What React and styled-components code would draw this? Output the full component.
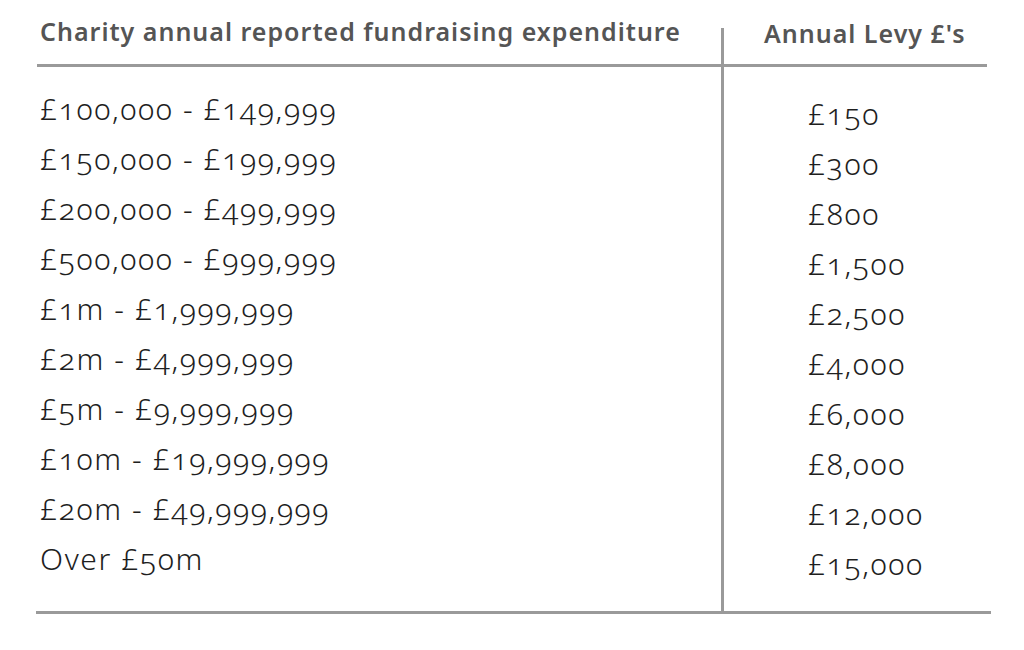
import styled, { createGlobalStyle } from "styled-components";

const GlobalStyle = createGlobalStyle`
    body {
        margin: 0;
        background: #ffffff;
        font-family: "Noto Sans", "Open Sans", sans-serif;
    }
`

const bands = [
    ["£100,000 - £149,999", "£150"],
    ["£150,000 - £199,999", "£300"],
    ["£200,000 - £499,999", "£800"],
    ["£500,000 - £999,999", "£1,500"],
    ["£1m - £1,999,999", "£2,500"],
    ["£2m - £4,999,999", "£4,000"],
    ["£5m - £9,999,999", "£6,000"],
    ["£10m - £19,999,999", "£8,000"],
    ["£20m - £49,999,999", "£12,000"],
    ["Over £50m", "£15,000"],
]

export default function App(){
    return(
        <Page>
            <GlobalStyle />
            <Table>
                <HeadLeft>Charity annual reported fundraising expenditure</HeadLeft>
                <HeadRight><span>Annual Levy £'s</span></HeadRight>
                <BodyLeft>
                    {bands.map(b => <Cell key={b[0]}>{b[0]}</Cell>)}
                </BodyLeft>
                <BodyRight>
                    {bands.map(b => <Cell key={b[1]}>{b[1]}</Cell>)}
                </BodyRight>
            </Table>
        </Page>
    )
}

const Page = styled.div`
    width: 1024px;
    height: 650px;
    padding: 0 33px 0 36px;
    box-sizing: border-box;
`

const Table = styled.div`
    display: grid;
    grid-template-columns: 685px 1fr;
    border-bottom: 3px solid #9a9a9a;
`

const HeadLeft = styled.div`
    padding: 16px 0 18px 3px;
    margin-left: 1px;
    border-bottom: 3px solid #9a9a9a;
    font-size: 25px;
    font-weight: 600;
    letter-spacing: 1px;
    color: #555555;
    line-height: 30px;
    white-space: nowrap;
`

const HeadRight = styled.div`
    margin-top: 28px;
    margin-right: 4px;
    border-left: 3px solid #9a9a9a;
    border-bottom: 3px solid #9a9a9a;
    font-size: 25px;
    font-weight: 600;
    letter-spacing: 1px;
    color: #555555;
    line-height: 30px;

    span{
        display: block;
        margin-top: -10px;
        padding-left: 40px;
    }
`

const BodyLeft = styled.div`
    padding: 17px 0 27px 4px;
    display: flex;
    flex-direction: column;
`

const BodyRight = styled.div`
    padding: 22px 0 22px 84px;
    border-left: 3px solid #9a9a9a;
    display: flex;
    flex-direction: column;
`

const Cell = styled.div`
    height: 50px;
    line-height: 50px;
    font-size: 30px;
    font-weight: 300;
    letter-spacing: 1.6px;
    color: #1e1e1e;
    font-variant-numeric: oldstyle-nums;
    white-space: nowrap;
`
